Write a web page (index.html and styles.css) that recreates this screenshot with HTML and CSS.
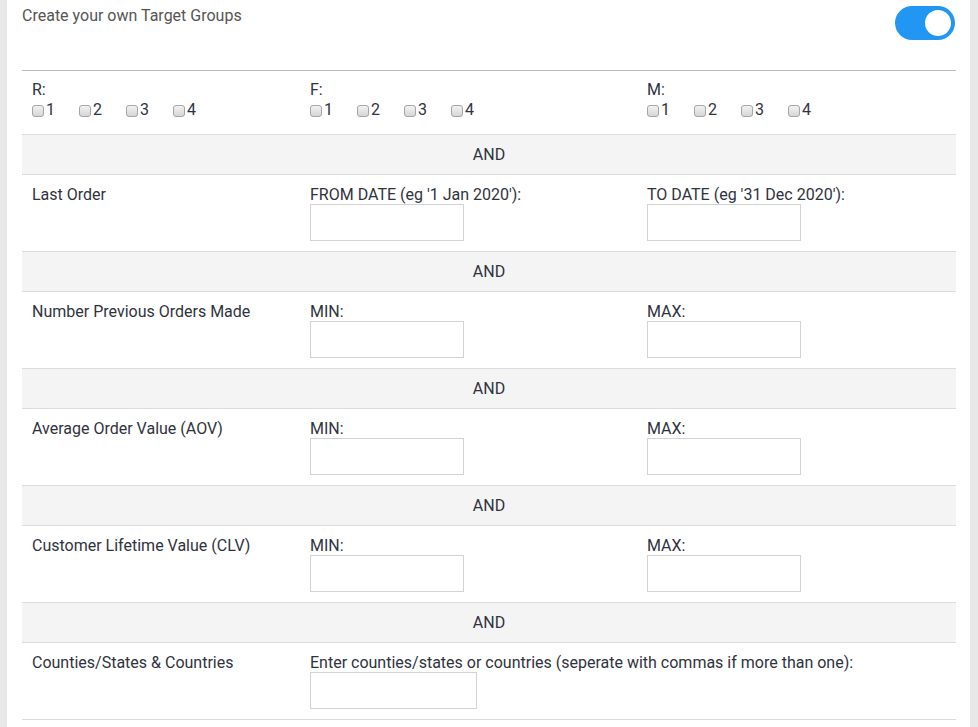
FILE: index.html
```html
<!DOCTYPE html>
<html lang="en">

<head>
    <meta charset="UTF-8">
    <meta name="viewport" content="width=device-width, initial-scale=1.0">
    <title>Target Groups</title>
    <link rel="stylesheet" href="styles.css">
</head>

<body>
    <div class="card">
        <!-- header -->
        <div class="card-head">
            <span class="title">Create your own Target Groups</span>
            <label class="switch">
                <input type="checkbox" checked>
                <span class="slider"></span>
            </label>
        </div>

        <table class="groups">
            <colgroup>
                <col class="c1">
                <col class="c2">
                <col class="c3">
            </colgroup>
            <tr class="rfm">
                <td>
                    R:<br>
                    <label class="chk"><input type="checkbox">1</label>
                    <label class="chk"><input type="checkbox">2</label>
                    <label class="chk"><input type="checkbox">3</label>
                    <label class="chk"><input type="checkbox">4</label>
                </td>
                <td>
                    F:<br>
                    <label class="chk"><input type="checkbox">1</label>
                    <label class="chk"><input type="checkbox">2</label>
                    <label class="chk"><input type="checkbox">3</label>
                    <label class="chk"><input type="checkbox">4</label>
                </td>
                <td>
                    M:<br>
                    <label class="chk"><input type="checkbox">1</label>
                    <label class="chk"><input type="checkbox">2</label>
                    <label class="chk"><input type="checkbox">3</label>
                    <label class="chk"><input type="checkbox">4</label>
                </td>
            </tr>
            <tr class="and"><td colspan="3">AND</td></tr>
            <tr>
                <td class="label">Last Order</td>
                <td>FROM DATE (eg '1 Jan 2020'):<br><input type="text" class="field"></td>
                <td>TO DATE (eg '31 Dec 2020'):<br><input type="text" class="field"></td>
            </tr>
            <tr class="and"><td colspan="3">AND</td></tr>
            <tr>
                <td class="label">Number Previous Orders Made</td>
                <td>MIN:<br><input type="text" class="field"></td>
                <td>MAX:<br><input type="text" class="field"></td>
            </tr>
            <tr class="and"><td colspan="3">AND</td></tr>
            <tr>
                <td class="label">Average Order Value (AOV)</td>
                <td>MIN:<br><input type="text" class="field"></td>
                <td>MAX:<br><input type="text" class="field"></td>
            </tr>
            <tr class="and"><td colspan="3">AND</td></tr>
            <tr>
                <td class="label">Customer Lifetime Value (CLV)</td>
                <td>MIN:<br><input type="text" class="field"></td>
                <td>MAX:<br><input type="text" class="field"></td>
            </tr>
            <tr class="and"><td colspan="3">AND</td></tr>
            <tr>
                <td class="label">Counties/States &amp; Countries</td>
                <td colspan="2">Enter counties/states or countries (seperate with commas if more than one):<br><input type="text" class="field wide"></td>
            </tr>
        </table>
    </div>
</body>

</html>
```

FILE: styles.css
```css
* {
    margin: 0;
    padding: 0;
    box-sizing: border-box;
    font-family: Roboto, 'Liberation Sans', Arial, sans-serif;
}

body {
    width: 978px;
    height: 727px;
    background: #e8e8e8;
    padding: 0 8px 0 7px;
    overflow: hidden;
}

.card {
    background: #fff;
    height: 100%;
    padding: 6px 14px 0 15px;
}

.card-head {
    display: flex;
    justify-content: space-between;
    align-items: flex-start;
    margin-bottom: 30px;
}

.title {
    font-size: 16px;
    color: #555;
    line-height: 20px;
}

/* toggle */
.switch {
    position: relative;
    display: inline-block;
    width: 60px;
    height: 34px;
    margin-right: 1px;
}

.switch input {
    display: none;
}

.slider {
    position: absolute;
    inset: 0;
    background: #2196f3;
    border-radius: 34px;
}

.slider::before {
    content: '';
    position: absolute;
    width: 26px;
    height: 26px;
    right: 4px;
    top: 4px;
    background: #fff;
    border-radius: 50%;
}

.groups {
    width: 934px;
    table-layout: fixed;
    border-collapse: collapse;
    font-size: 16px;
    line-height: 20px;
    color: #2f3340;
}

.c1 {
    width: 278px;
}

.c2 {
    width: 337px;
}

.c3 {
    width: 319px;
}

.groups td {
    vertical-align: top;
    padding: 10px 10px 10px 10px;
    border-top: 1px solid #dcdcdc;
    border-bottom: 1px solid #dcdcdc;
}

.groups tr.rfm td {
    border-top: 1px solid #bdb9b5;
    padding: 9px 10px 12px;
}

.groups td.label {
    border-top-color: #e8e8e8;
}

.and td {
    background: #f4f4f4;
    text-align: center;
    padding: 10px 10px 9px;
}

.chk {
    display: inline-flex;
    align-items: center;
    margin-right: 20px;
}

.chk input {
    appearance: none;
    -webkit-appearance: none;
    width: 12px;
    height: 12px;
    margin: 1px 2px 0 0;
    border: 1px solid #a6a6a6;
    border-radius: 3px;
    background: linear-gradient(#f2f2f2, #d6d6d6);
}

.field {
    display: block;
    width: 154px;
    height: 37px;
    margin-top: -1px;
    border: 1px solid #d3d3d3;
    background: #fff;
}

.wide {
    width: 167px;
}
```
